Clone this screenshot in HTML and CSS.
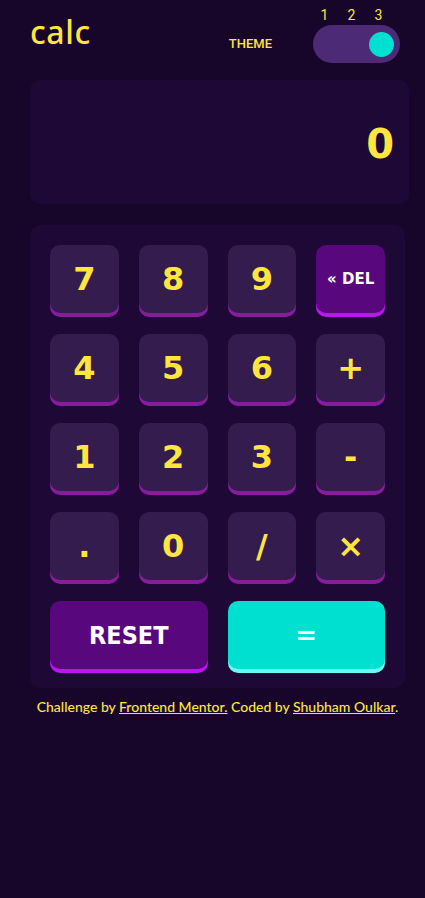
FILE: index.html
```html
<!DOCTYPE html>
<html lang="en">
<head>
<meta charset="utf-8">
<title>calc</title>
<link rel="stylesheet" href="styles.css">
</head>
<body>
<main class="app">
  <header class="header">
    <h1 class="logo">calc</h1>
    <div class="theme">
      <span class="theme-label">THEME</span>
      <div class="theme-switch">
        <div class="theme-nums"><span>1</span><span>2</span><span>3</span></div>
        <div class="toggle"><span class="knob"></span></div>
      </div>
    </div>
  </header>

  <section class="display"><span class="result">0</span></section>

  <section class="keypad">
    <button class="key">7</button>
    <button class="key">8</button>
    <button class="key">9</button>
    <button class="key key-del">« DEL</button>
    <button class="key">4</button>
    <button class="key">5</button>
    <button class="key">6</button>
    <button class="key">+</button>
    <button class="key">1</button>
    <button class="key">2</button>
    <button class="key">3</button>
    <button class="key">-</button>
    <button class="key">.</button>
    <button class="key">0</button>
    <button class="key">/</button>
    <button class="key">×</button>
    <button class="key key-reset">RESET</button>
    <button class="key key-equal">=</button>
  </section>

  <footer class="footer">Challenge by <a href="#">Frontend Mentor.</a> Coded by <a href="#">Shubham Oulkar</a>.</footer>
</main>
</body>
</html>
```

FILE: styles.css
```css
* { box-sizing: border-box; }
html, body { margin: 0; padding: 0; }
body {
  background: #17062a;
  min-height: 898px;
  font-family: "Noto Sans", sans-serif;
  color: #ffe53d;
}
.app {
  width: 379px;
  margin-left: 30px;
  padding-top: 9px;
}
.header {
  display: flex;
  justify-content: space-between;
  align-items: flex-start;
  padding-right: 9px;
  height: 54px;
}
.logo {
  margin: 7px 0 0 0;
  font-family: "Noto Sans", sans-serif;
  font-weight: 500;
  font-size: 32px;
  line-height: 1;
  letter-spacing: 0.6px;
  color: #ffe53d;
}
.theme {
  display: flex;
  align-items: flex-end;
  gap: 41px;
}
.theme-label {
  font-family: Roboto, sans-serif;
  font-weight: 500;
  font-size: 13px;
  line-height: 14px;
  margin-bottom: 12px;
  color: #ffe53d;
}
.theme-switch {
  display: flex;
  flex-direction: column;
}
.theme-nums {
  display: flex;
  margin-left: -2px;
  height: 16px;
}
.theme-nums span {
  width: 27px;
  text-align: center;
  font-family: Roboto, sans-serif;
  font-size: 14px;
  line-height: 12px;
  color: #ffe53d;
}
.toggle {
  width: 87px;
  height: 38px;
  border-radius: 19px;
  background: #4d2a76;
  display: flex;
  align-items: center;
  justify-content: flex-end;
  padding-right: 6px;
}
.knob {
  width: 25px;
  height: 25px;
  border-radius: 50%;
  background: #00e0d1;
}
.display {
  margin-top: 17px;
  height: 124px;
  border-radius: 10px;
  background: #1e0936;
  display: flex;
  align-items: center;
  justify-content: flex-end;
  padding: 4px 15px 0 0;
}
.result {
  font-family: "DejaVu Sans", sans-serif;
  font-weight: 700;
  font-size: 40px;
  color: #ffe53d;
}
.keypad {
  margin-top: 21px;
  width: 375px;
  background: #1e0936;
  border-radius: 10px;
  padding: 20px 20px 19px 20px;
  display: grid;
  grid-template-columns: repeat(4, 1fr);
  grid-auto-rows: 68px;
  column-gap: 20px;
  row-gap: 21px;
}
.key {
  border: none;
  border-radius: 10px;
  background: #341c4f;
  box-shadow: 0 4px 0 #871c9c;
  font-family: "DejaVu Sans", sans-serif;
  font-weight: 700;
  font-size: 32px;
  color: #ffe53d;
  padding: 0;
  display: flex;
  align-items: center;
  justify-content: center;
}
.key-del {
  background: #58077d;
  box-shadow: 0 4px 0 #bc15f4;
  color: #ffffff;
  font-size: 15px;
}
.key-reset {
  grid-column: span 2;
  background: #58077d;
  box-shadow: 0 4px 0 #bc15f4;
  color: #ffffff;
  font-family: "DejaVu Sans Condensed", "DejaVu Sans", sans-serif;
  font-stretch: condensed;
  font-size: 25px;
}
.key-equal {
  grid-column: span 2;
  background: #00e0d1;
  box-shadow: 0 4px 0 #6cf9f2;
  color: #ffffff;
  font-size: 26px;
}
.footer {
  margin-top: 11px;
  width: 375px;
  text-align: center;
  font-family: Lato, sans-serif;
  font-weight: 500;
  font-size: 14px;
  line-height: 16px;
  color: #ffe53d;
}
.footer a {
  color: #ffe53d;
  text-decoration: underline;
}
```
